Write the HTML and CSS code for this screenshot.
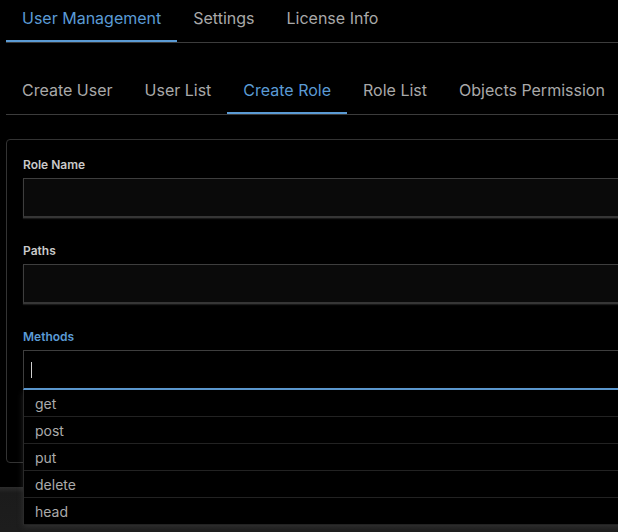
FILE: index.html
```html
<!DOCTYPE html>
<html>
<head>
<meta charset="utf-8">
<link rel="stylesheet" href="styles.css">
</head>
<body>
<div class="page">
  <nav class="tabs">
    <div class="tab active">User Management</div>
    <div class="tab">Settings</div>
    <div class="tab">License Info</div>
  </nav>
  <nav class="tabs sub">
    <div class="tab">Create User</div>
    <div class="tab">User List</div>
    <div class="tab active">Create Role</div>
    <div class="tab">Role List</div>
    <div class="tab">Objects Permission</div>
  </nav>
  <section class="card">
    <div class="field">
      <label class="label">Role Name</label>
      <div class="input"></div>
    </div>
    <div class="field">
      <label class="label">Paths</label>
      <div class="input"></div>
    </div>
    <div class="field">
      <label class="label focus">Methods</label>
      <div class="input focused"><span class="caret"></span></div>
      <ul class="menu">
        <li>get</li>
        <li>post</li>
        <li>put</li>
        <li>delete</li>
        <li>head</li>
      </ul>
    </div>
  </section>
  <div class="footer"></div>
</div>
</body>
</html>
```
FILE: styles.css
```css
html, body {
  margin: 0;
  padding: 0;
  background: #000;
  overflow: hidden;
  height: 100%;
}
body {
  font-family: Inter, "Liberation Sans", sans-serif;
  color: #a8a8a8;
}
.page {
  width: 780px;
  padding-left: 6px;
  box-sizing: border-box;
}
.tabs {
  display: flex;
  border-bottom: 1px solid #3c3c3c;
  height: 42px;
}
.tab {
  padding: 8px 16px 13px;
  line-height: 20px;
  font-size: 16px;
  border-bottom: 2px solid transparent;
  color: #a9a9a9;
  white-space: nowrap;
}
.tab.active {
  color: #5b9bd5;
  border-bottom-color: #5b9bd5;
}
.tabs.sub {
  margin-top: 29px;
}
.card {
  margin-top: 24px;
  border: 1px solid #333;
  border-radius: 4px;
  padding: 16px 16px 0;
  height: 324px;
  box-sizing: border-box;
  margin-right: -2px;
}
.field {
  position: relative;
  margin-bottom: 24px;
}
.label {
  display: block;
  font-size: 12px;
  font-weight: 600;
  line-height: 18px;
  color: #c9c9c9;
  margin-bottom: 4px;
}
.label.focus {
  color: #5b9bd5;
}
.input {
  height: 40px;
  box-sizing: border-box;
  background: #0a0a0a;
  border: 1px solid #3e3e3e;
  border-bottom: 2px solid #363636;
  box-shadow: 0 1px 1px rgba(40, 40, 40, 0.6);
}
.input.focused {
  background: #000;
  border-bottom-color: #5b9bd5;
  box-shadow: none;
  position: relative;
}
.caret {
  position: absolute;
  left: 7px;
  top: 11px;
  width: 1px;
  height: 16px;
  background: #cfcfcf;
}
.menu {
  position: absolute;
  left: 0;
  right: 0;
  top: 62px;
  margin: 0;
  padding: 0;
  list-style: none;
  background: #000;
  border-left: 1px solid #2a2a2a;
  box-shadow: 0 2px 6px rgba(90, 90, 90, 0.35);
  z-index: 2;
}
.menu li {
  height: 25px;
  padding-top: 1px;
  line-height: 26px;
  padding-left: 11px;
  font-size: 14px;
  color: #ababab;
  border-bottom: 1px solid #222;
}
.footer {
  margin-top: 24px;
  margin-left: -6px;
  height: 60px;
  background: linear-gradient(#2c2c2c, #1b1b1b 6px, #1e1e1e);
}
```
